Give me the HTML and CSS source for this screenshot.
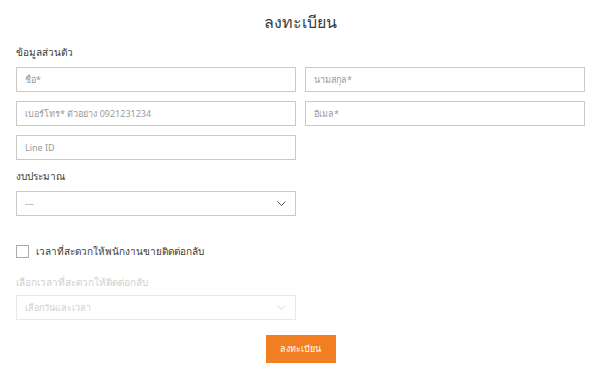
FILE: index.html
```html
<!DOCTYPE html>
<html lang="th">
<head>
    <meta charset="UTF-8" />
    <meta name="viewport" content="width=device-width, initial-scale=1.0" />
    <title>ลงทะเบียน</title>
    <link rel="stylesheet" href="styles.css">
</head>
<body>
    <form class="register-form">
        <h1 class="form-title">ลงทะเบียน</h1>

        <p class="section-label">ข้อมูลส่วนตัว</p>

        <div class="field-grid">
            <input type="text" class="text-input" placeholder="ชื่อ*">
            <input type="text" class="text-input" placeholder="นามสกุล*">
            <input type="text" class="text-input" placeholder="เบอร์โทร* ตัวอย่าง 0921231234">
            <input type="text" class="text-input" placeholder="อีเมล*">
            <input type="text" class="text-input" placeholder="Line ID">
        </div>

        <p class="section-label budget-label">งบประมาณ</p>

        <div class="select-box">
            <span class="select-value">---</span>
            <svg class="chevron" width="9" height="5" viewBox="0 0 9 5">
                <path d="M0.5 0.5 L4.5 4.5 L8.5 0.5" fill="none" stroke="#555" stroke-width="1"/>
            </svg>
        </div>

        <label class="check-row">
            <span class="check-box"></span>
            <span class="check-text">เวลาที่สะดวกให้พนักงานขายติดต่อกลับ</span>
        </label>

        <p class="section-label muted-label">เลือกเวลาที่สะดวกให้ติดต่อกลับ</p>

        <div class="select-box disabled">
            <span class="select-value">เลือกวันและเวลา</span>
            <svg class="chevron" width="9" height="5" viewBox="0 0 9 5">
                <path d="M0.5 0.5 L4.5 4.5 L8.5 0.5" fill="none" stroke="#d6d6d6" stroke-width="1"/>
            </svg>
        </div>

        <div class="actions">
            <button type="button" class="submit-button">ลงทะเบียน</button>
        </div>
    </form>
</body>
</html>
```

FILE: styles.css
```css
:root {
    --border-color: #c9c9c9;
    --light-border: #e8e8e8;
    --dark-text: #3a3a3a;
    --placeholder: #9a9a9a;
    --muted: #cfcfcf;
    --orange: #f27e22;
}

* {
    margin: 0;
    padding: 0;
    box-sizing: border-box;
}

body {
    font-family: "Noto Sans", "DejaVu Sans", sans-serif;
    background-color: #fff;
    color: var(--dark-text);
}

.register-form {
    padding: 12px 15px 0 16px;
}

.form-title {
    text-align: center;
    font-size: 16px;
    font-weight: normal;
    line-height: 20px;
    margin-bottom: 13px;
}

.section-label {
    font-size: 10px;
    line-height: 14px;
    margin-bottom: 8px;
}

.field-grid {
    display: grid;
    grid-template-columns: 280px 280px;
    column-gap: 9px;
    row-gap: 9px;
}

.text-input {
    height: 25px;
    border: 1px solid var(--border-color);
    padding: 0 8px;
    font-family: inherit;
    font-size: 9px;
    color: var(--dark-text);
    outline: none;
}

.text-input::placeholder {
    color: var(--placeholder);
}

.budget-label {
    margin-top: 9px;
}

.select-box {
    width: 280px;
    height: 25px;
    border: 1px solid var(--border-color);
    padding: 0 9px 0 8px;
    display: flex;
    align-items: center;
    justify-content: space-between;
    font-size: 9px;
    color: var(--placeholder);
}

.select-box.disabled {
    border-color: var(--light-border);
    color: var(--muted);
}

.check-row {
    display: flex;
    align-items: center;
    gap: 7px;
    margin-top: 28px;
    font-size: 10px;
}

.check-box {
    width: 13px;
    height: 13px;
    border: 1px solid #aaa;
    background: #fff;
}

.muted-label {
    color: var(--muted);
    margin-top: 16px;
    margin-bottom: 6px;
}

.actions {
    display: flex;
    justify-content: center;
    margin-top: 15px;
}

.submit-button {
    width: 70px;
    height: 28px;
    border: none;
    background-color: var(--orange);
    color: #fff;
    font-family: inherit;
    font-size: 9px;
    cursor: pointer;
}
```
